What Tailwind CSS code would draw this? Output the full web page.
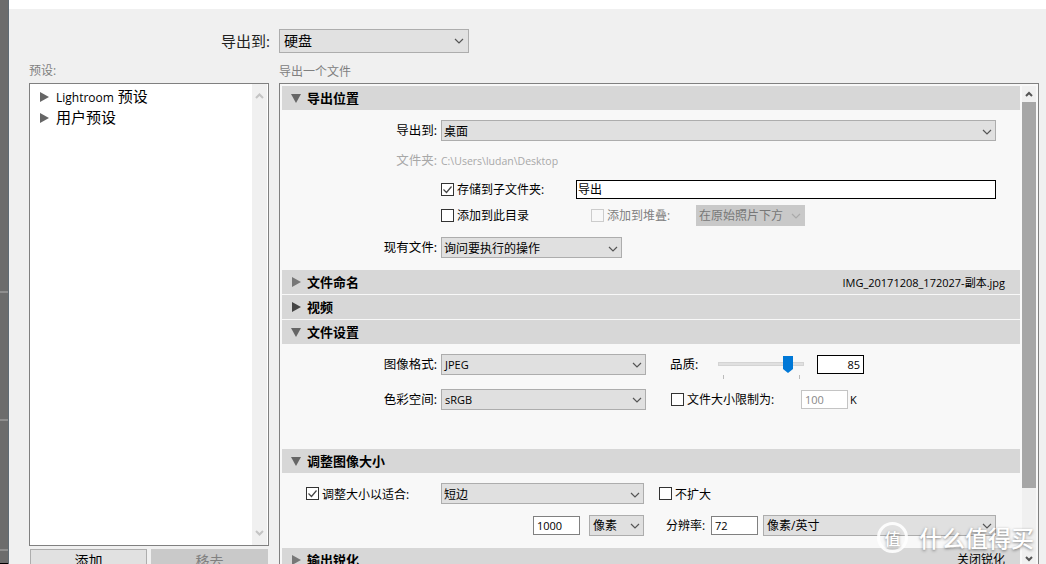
<!DOCTYPE html>
<html lang="zh-CN">
<head>
    <meta charset="UTF-8">
    <title>导出</title>
    <script src="https://cdn.jsdelivr.net/npm/@tailwindcss/browser@4"></script>
</head>
<body class="w-[1046px] h-[564px] overflow-hidden flex bg-[#f0f0f0] text-black text-[12px] leading-none font-['Open_Sans','Noto_Sans_CJK_SC',sans-serif]">

    <!-- window behind the dialog -->
    <div class="w-[9px] h-full shrink-0 flex flex-col bg-[#6c6c6c] border-r border-[#5f6b74]">
        <div class="h-[291px] shrink-0"></div>
        <div class="h-[2px] shrink-0 bg-[#8e8e8e]"></div>
        <div class="h-[126px] shrink-0"></div>
        <div class="h-[2px] shrink-0 bg-[#8e8e8e]"></div>
        <div class="h-[128px] shrink-0"></div>
        <div class="h-[2px] shrink-0 bg-[#8e8e8e]"></div>
        <div class="flex-1"></div>
        <div class="h-[1px] shrink-0 bg-black"></div>
    </div>

    <div class="flex-1 min-w-0 flex flex-col">
        <div class="h-[9px] shrink-0 bg-white"></div>

        <!-- 导出到 -->
        <div class="mt-[20px] ml-[20px] flex items-center shrink-0 h-[24px]">
            <span class="w-[241px] text-right text-[15px] text-[#222]">导出到:</span>
            <div class="w-[190px] h-[24px] ml-[9px] flex items-center justify-between pl-[4px] pr-[4px] bg-[#e1e1e1] border border-[#adadad] text-[14px]">
                硬盘
                <svg width="10" height="6" viewBox="0 0 10 6" fill="none" stroke="#555" stroke-width="1.2"><path d="M1 1l4 4 4-4"/></svg>
            </div>
        </div>

        <div class="mt-[9px] ml-[20px] flex gap-[10px] flex-1 min-h-0">
            <!-- 预设 column -->
            <div class="w-[240px] shrink-0 flex flex-col">
                <div class="h-[18px] shrink-0 flex items-center text-[#808080]">预设:</div>
                <div class="mt-[3px] h-[463px] shrink-0 flex bg-white border border-[#808080]">
                    <div class="flex-1 pt-[2px] pl-[10px] text-[15px]">
                        <div class="h-[21px] flex items-center gap-[7px]">
                            <svg width="9" height="10" viewBox="0 0 9 10" fill="#666"><path d="M0 0l9 5-9 5z"/></svg>
                            <span><span class="text-[12px]">Lightroom</span> 预设</span>
                        </div>
                        <div class="h-[21px] flex items-center gap-[7px]">
                            <svg width="9" height="10" viewBox="0 0 9 10" fill="#666"><path d="M0 0l9 5-9 5z"/></svg>
                            <span>用户预设</span>
                        </div>
                    </div>
                    <div class="w-[15px] mr-[1px] flex flex-col justify-between items-center py-[9px] bg-[#f0f0f0]">
                        <svg width="9" height="6" viewBox="0 0 9 6" fill="none" stroke="#c4c4c4" stroke-width="2"><path d="M1 5l3.500-3.500L8 5"/></svg>
                        <svg width="9" height="6" viewBox="0 0 9 6" fill="none" stroke="#c4c4c4" stroke-width="2"><path d="M1 1l3.500 3.500L8 1"/></svg>
                    </div>
                </div>
                <div class="mt-[3px] ml-[1px] shrink-0 flex gap-[4px] text-[14px]">
                    <div class="w-[117px] h-[24px] flex items-center justify-center bg-[#e1e1e1] border border-[#adadad]">添加</div>
                    <div class="w-[117px] h-[24px] flex items-center justify-center bg-[#c9c9c9] text-[#808080]">移去</div>
                </div>
            </div>

            <!-- 导出一个文件 column -->
            <div class="w-[760px] shrink-0 flex flex-col min-h-0">
                <div class="h-[18px] shrink-0 flex items-center pt-[2px] text-[#808080]">导出一个文件</div>
                <div class="mt-[3px] flex-1 min-h-0 flex overflow-hidden bg-[#f8f8f8] border border-[#808080] border-b-0">
                    <div class="w-[741px] shrink-0 pt-[2px] pl-[2px]">

                        <!-- 导出位置 -->
                        <div class="w-[738px] h-[24px] flex items-center pl-[9px] gap-[6px] bg-[#d7d7d7] text-[13px] font-bold">
                            <svg width="10" height="9" viewBox="0 0 10 9" fill="#666"><path d="M0 0h10L5 9z"/></svg>
                            导出位置
                        </div>
                        <div class="mt-[10px] flex items-center h-[21px]">
                            <span class="w-[155px] pt-[2px] text-right text-[12.500px]">导出到:</span>
                            <div class="ml-[4px] w-[555px] h-[21px] flex items-center justify-between pt-[2px] pl-[2px] pr-[3px] bg-[#e0e0e0] border border-[#adadad]">
                                桌面
                                <svg width="10" height="6" viewBox="0 0 10 6" fill="none" stroke="#555" stroke-width="1.2"><path d="M1 1l4 4 4-4"/></svg>
                            </div>
                        </div>
                        <div class="mt-[10px] flex items-center h-[20px] text-[#a8a8a8]">
                            <span class="w-[155px] text-right text-[12.500px]">文件夹:</span>
                            <span class="ml-[4px] text-[10.500px]">C:\Users\ludan\Desktop</span>
                        </div>
                        <div class="mt-[9px] flex items-center h-[19px]">
                            <div class="ml-[159px] w-[13px] h-[13px] flex items-center justify-center bg-white border border-[#333]">
                                <svg width="11" height="11" viewBox="0 0 11 11" fill="none" stroke="#444" stroke-width="1.2"><path d="M1.500 5.500l3 3 5-6"/></svg>
                            </div>
                            <span class="ml-[3px] w-[119px]">存储到子文件夹:</span>
                            <div class="w-[420px] h-[19px] flex items-center pl-[1px] bg-white border border-black">导出</div>
                        </div>
                        <div class="mt-[6px] flex items-center h-[21px]">
                            <div class="ml-[159px] w-[13px] h-[13px] bg-white border border-[#333]"></div>
                            <span class="ml-[3px] w-[134px]">添加到此目录</span>
                            <div class="w-[13px] h-[13px] border border-[#ccc]"></div>
                            <span class="ml-[3px] w-[89px] text-[#808080]">添加到堆叠:</span>
                            <div class="w-[109px] h-[21px] flex items-center justify-between pl-[3px] pr-[4px] bg-[#c9c9c9] text-[#777]">
                                在原始照片下方
                                <svg width="10" height="6" viewBox="0 0 10 6" fill="none" stroke="#aaa" stroke-width="1.2"><path d="M1 1l4 4 4-4"/></svg>
                            </div>
                        </div>
                        <div class="mt-[11px] flex items-center h-[21px]">
                            <span class="w-[155px] pt-[2px] text-right text-[12.500px]">现有文件:</span>
                            <div class="ml-[4px] w-[181px] h-[21px] flex items-center justify-between pt-[2px] pl-[2px] pr-[3px] bg-[#e0e0e0] border border-[#adadad]">
                                询问要执行的操作
                                <svg width="10" height="6" viewBox="0 0 10 6" fill="none" stroke="#555" stroke-width="1.2"><path d="M1 1l4 4 4-4"/></svg>
                            </div>
                        </div>

                        <!-- 文件命名 -->
                        <div class="mt-[12px] w-[738px] h-[24px] flex items-center pl-[10px] pr-[15px] gap-[6px] bg-[#d7d7d7]">
                            <svg width="9" height="10" viewBox="0 0 9 10" fill="#777"><path d="M0 0l9 5-9 5z"/></svg>
                            <span class="text-[13px] font-bold">文件命名</span>
                            <span class="ml-auto text-[11px]">IMG_20171208_172027-副本.jpg</span>
                        </div>
                        <div class="mt-[1px] w-[738px] h-[24px] flex items-center pl-[10px] gap-[6px] bg-[#d7d7d7] text-[13px] font-bold">
                            <svg width="9" height="10" viewBox="0 0 9 10" fill="#444"><path d="M0 0l9 5-9 5z"/></svg>
                            视频
                        </div>

                        <!-- 文件设置 -->
                        <div class="mt-[1px] w-[738px] h-[24px] flex items-center pl-[9px] gap-[6px] bg-[#d7d7d7] text-[13px] font-bold">
                            <svg width="10" height="9" viewBox="0 0 10 9" fill="#666"><path d="M0 0h10L5 9z"/></svg>
                            文件设置
                        </div>
                        <div class="mt-[10px] flex items-center h-[21px]">
                            <span class="w-[155px] pt-[2px] text-right text-[12.500px]">图像格式:</span>
                            <div class="ml-[4px] w-[205px] h-[21px] flex items-center justify-between pl-[3px] pr-[3px] bg-[#e0e0e0] border border-[#adadad] text-[11px]">
                                JPEG
                                <svg width="10" height="6" viewBox="0 0 10 6" fill="none" stroke="#555" stroke-width="1.2"><path d="M1 1l4 4 4-4"/></svg>
                            </div>
                            <span class="ml-[24px] w-[48px] pt-[2px] text-[12.500px]">品质:</span>
                            <div class="relative w-[86px] h-[21px]">
                                <div class="absolute left-0 right-0 top-[8px] h-[4px] bg-[#e0e0e0] border border-[#d4d4d4]"></div>
                                <svg class="absolute left-[65px] top-[2px]" width="10" height="17" viewBox="0 0 10 17" fill="#0078d7"><path d="M0 0h10v13l-5 4-5-4z"/></svg>
                                <div class="absolute left-[5px] top-[21px] w-px h-[4px] bg-[#bbb]"></div>
                                <div class="absolute left-[81px] top-[21px] w-px h-[4px] bg-[#bbb]"></div>
                            </div>
                            <div class="ml-[13px] w-[47px] h-[19px] flex items-center justify-end pr-[3px] bg-white border border-black text-[11px]">85</div>
                        </div>
                        <div class="mt-[14px] flex items-center h-[21px]">
                            <span class="w-[155px] pt-[2px] text-right text-[12.500px]">色彩空间:</span>
                            <div class="ml-[4px] w-[205px] h-[21px] flex items-center justify-between pl-[3px] pr-[3px] bg-[#e0e0e0] border border-[#adadad] text-[11px]">
                                sRGB
                                <svg width="10" height="6" viewBox="0 0 10 6" fill="none" stroke="#555" stroke-width="1.2"><path d="M1 1l4 4 4-4"/></svg>
                            </div>
                            <div class="ml-[25px] w-[13px] h-[13px] bg-white border border-[#333]"></div>
                            <span class="ml-[3px] w-[114px]">文件大小限制为:</span>
                            <div class="w-[47px] h-[19px] flex items-center pl-[3px] bg-white border border-[#c4c4c4] text-[#888] text-[11px]">100</div>
                            <span class="ml-[2px] text-[11px]">K</span>
                        </div>

                        <!-- 调整图像大小 -->
                        <div class="mt-[39px] w-[738px] h-[24px] flex items-center pl-[9px] gap-[6px] bg-[#d7d7d7] text-[13px] font-bold">
                            <svg width="10" height="9" viewBox="0 0 10 9" fill="#666"><path d="M0 0h10L5 9z"/></svg>
                            调整图像大小
                        </div>
                        <div class="mt-[10px] flex items-center h-[21px]">
                            <div class="ml-[24px] w-[13px] h-[13px] flex items-center justify-center bg-white border border-[#333]">
                                <svg width="11" height="11" viewBox="0 0 11 11" fill="none" stroke="#444" stroke-width="1.2"><path d="M1.500 5.500l3 3 5-6"/></svg>
                            </div>
                            <span class="ml-[3px] w-[119px] pt-[2px]">调整大小以适合:</span>
                            <div class="w-[203px] h-[21px] flex items-center justify-between pt-[2px] pl-[2px] pr-[3px] bg-[#e0e0e0] border border-[#adadad]">
                                短边
                                <svg width="10" height="6" viewBox="0 0 10 6" fill="none" stroke="#555" stroke-width="1.2"><path d="M1 1l4 4 4-4"/></svg>
                            </div>
                            <div class="ml-[15px] w-[13px] h-[13px] bg-white border border-[#333]"></div>
                            <span class="ml-[3px] pt-[2px]">不扩大</span>
                        </div>
                        <div class="mt-[11px] flex items-center h-[21px]">
                            <div class="ml-[251px] w-[47px] h-[19px] flex items-center pl-[3px] bg-white border border-[#808080] text-[11px]">1000</div>
                            <div class="ml-[9px] w-[55px] h-[21px] flex items-center justify-between pl-[3px] pr-[3px] bg-[#e0e0e0] border border-[#adadad]">
                                像素
                                <svg width="10" height="6" viewBox="0 0 10 6" fill="none" stroke="#555" stroke-width="1.2"><path d="M1 1l4 4 4-4"/></svg>
                            </div>
                            <span class="ml-[22px] w-[45px]">分辨率:</span>
                            <div class="w-[47px] h-[19px] flex items-center pl-[3px] bg-white border border-[#808080] text-[11px]">72</div>
                            <div class="ml-[5px] w-[233px] h-[21px] flex items-center justify-between pl-[3px] pr-[3px] bg-[#e0e0e0] border border-[#adadad]">
                                像素/英寸
                                <svg width="10" height="6" viewBox="0 0 10 6" fill="none" stroke="#555" stroke-width="1.2"><path d="M1 1l4 4 4-4"/></svg>
                            </div>
                        </div>

                        <!-- 输出锐化 -->
                        <div class="mt-[12px] w-[738px] h-[24px] flex items-center pl-[10px] pr-[15px] gap-[6px] bg-[#d7d7d7]">
                            <svg width="9" height="10" viewBox="0 0 9 10" fill="#777"><path d="M0 0l9 5-9 5z"/></svg>
                            <span class="text-[13px] font-bold">输出锐化</span>
                            <span class="ml-auto">关闭锐化</span>
                        </div>
                    </div>

                    <!-- scrollbar -->
                    <div class="w-[14px] ml-[1px] mt-[2px] shrink-0 flex flex-col bg-[#f0f0f0]">
                        <div class="h-[16px] flex items-center justify-center">
                            <svg width="8" height="6" viewBox="0 0 8 6" fill="none" stroke="#555" stroke-width="2"><path d="M1 5l3-3 3 3"/></svg>
                        </div>
                        <div class="h-[386px] bg-[#a6a6a6]"></div>
                        <div class="flex-1 flex items-end justify-center pb-[2px]">
                            <svg width="8" height="6" viewBox="0 0 8 6" fill="none" stroke="#555" stroke-width="2"><path d="M1 1l3 3 3-3"/></svg>
                        </div>
                    </div>
                </div>
            </div>
        </div>
    </div>

    <!-- site watermark over the corner -->
    <div class="absolute left-[877px] top-[522px] flex items-center gap-[11px] text-white [text-shadow:0_1px_3px_rgba(0,0,0,0.5)] font-medium font-['Noto_Sans_CJK_SC',sans-serif]">
        <div class="w-[31px] h-[31px] flex items-center justify-center rounded-full border-[3px] border-white/90 text-[16px]">值</div>
        <span class="text-[23px] whitespace-nowrap">什么值得买</span>
    </div>
</body>
</html>
